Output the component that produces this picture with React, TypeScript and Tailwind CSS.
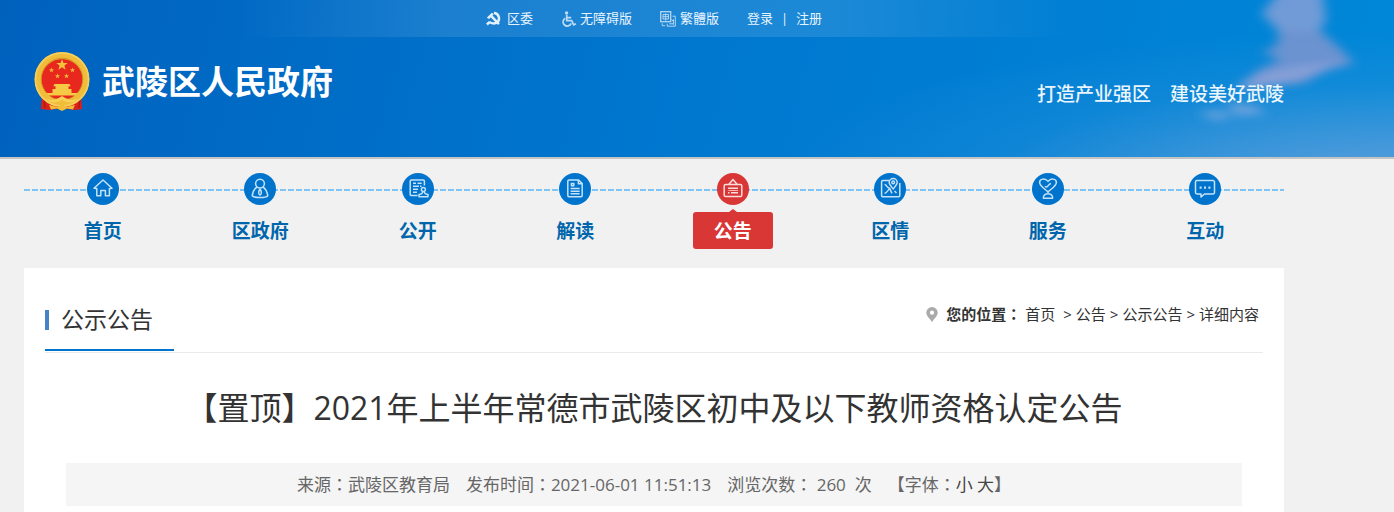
import React from 'react';

const navItems = [
  {
    name: '首页',
    icon: (
      <>
        <path d="M7 15.2 16 7l9 8.2-2.6.3v7.3h-4v-5.3h-4.6v5.3H9.8v-7.3z" />
      </>
    ),
  },
  {
    name: '区政府',
    icon: (
      <>
        <circle cx="16" cy="10.6" r="4.4" />
        <path d="M13 13.8C10.400 15.800 8.600 19.600 8.200 22.800c2 2.400 13.600 2.400 15.600 0-.4-3.200-2.200-7-4.800-9" />
        <path d="M16 16.4c-1.600 1.600-2 4.400 0 5.600 2-1.200 1.600-4 0-5.600z" />
      </>
    ),
  },
  {
    name: '公开',
    icon: (
      <>
        <path d="M15.6 22.6H9.4a1.2 1.2 0 0 1-1.2-1.2V8.2A1.2 1.2 0 0 1 9.4 7h11.8a1.2 1.2 0 0 1 1.2 1.2v4.4" />
        <path d="M11 10.2h3M15.5 10.2h4.2M11 13.2h6M18 13.2h1.5M11 16.2h5M11 19.2h4" />
        <circle cx="21.4" cy="16.4" r="2" />
        <path d="M20.6 18.6c.2 1.8-.6 2.4-3.6 3v2.2h9v-2.2c-3-.6-3.8-1.2-3.600-3" />
      </>
    ),
  },
  {
    name: '解读',
    icon: (
      <>
        <path d="M19.6 7H10a1.2 1.2 0 0 0-1.2 1.2v14.4a1.2 1.2 0 0 0 1.2 1.2h12a1.2 1.2 0 0 0 1.2-1.2V10.6z" />
        <path d="M19.4 7v3.8h3.8" />
        <path d="M12.4 10.400h2.400v2.400h-2.400zM11.600 15.600h9M11.600 18.200h9M11.600 20.800h9" />
      </>
    ),
  },
  {
    name: '公告',
    active: true,
    icon: (
      <>
        <rect x="7.2" y="11.600" width="17.600" height="12" rx="1.4" />
        <path d="M11.800 11.400 16 6.600l4.200 4.800M11 15.200h10M11 19.800h1.500M14 19.800h7" />
        <path d="M11.500 17.500h9.500" strokeWidth="0.8" />
      </>
    ),
  },
  {
    name: '区情',
    icon: (
      <>
        <path d="M15.500 7.400H8.800A1.200 1.200 0 0 0 7.600 8.600v14a1.200 1.200 0 0 0 1.200 1.200h15.800a1.200 1.200 0 0 0 1.200-1.200V10" />
        <path d="M19.200 16c-2.400-3-4-4.600-4-6.400a4 4 0 0 1 8 0c0 1.800-1.600 3.400-4 6.400z" />
        <circle cx="19.200" cy="9.400" r="1.300" />
        <path d="M10.600 11.500c2 .2 2 2.500 4 3.300s1.800 3 3.400 5.500M10.600 20.500c1.800-.4 3.400-3 4.800-4.600M20.500 18l2 2" />
      </>
    ),
  },
  {
    name: '服务',
    icon: (
      <>
        <path d="M16 18.800c-4.200-3.600-8.400-6.200-8.400-9.400 0-3.600 5.400-4.800 8.400-1 3-3.800 8.400-2.600 8.400 1 0 3.200-4.200 5.800-8.400 9.400z" />
        <path d="M13 13.200c1.200 1.600 2.400.6 3.400-.8.900-1.400 1.400-1.800 2.600-2" />
        <path d="M16 18.400v2M11.400 25.200c-.8-5.800 10-5.800 9.200 0z" />
      </>
    ),
  },
  {
    name: '互动',
    icon: (
      <>
        <path d="M7.900 7.500h16.200a1.400 1.400 0 0 1 1.400 1.400v10.700a1.400 1.400 0 0 1-1.400 1.400h-8.600l-3.500 3v-3H7.900a1.400 1.400 0 0 1-1.400-1.400V8.900a1.400 1.400 0 0 1 1.400-1.400z" />
        <path d="M10.600 14.600h2M15 14.600h2M19.400 14.600h2" strokeWidth="2.200" />
      </>
    ),
  },
];

// the TC face centres the full-width colon in its box
const Colon = () => <span className="font-['Noto_Sans_CJK_TC',sans-serif]">：</span>;

const PartyIcon = () => (
  <svg className="size-[15px]" viewBox="0 0 16 16" fill="none" stroke="#e4f1fc" strokeWidth="2.6" aria-hidden="true">
    <path d="M8.600 1.800c5.800 1.200 7 8.200 2.600 10.600-2.800 1.500-5.600.8-7.800-.8" />
    <path d="M5 4.600 13.800 14" />
    <path d="M.8 7.200 6.200 1.800l2.200 1.400L3.400 8.600z" fill="#e4f1fc" stroke="none" />
    <path d="M4 11.600 1 14.400" />
  </svg>
);

const WheelchairIcon = () => (
  <svg className="size-4" viewBox="0 0 16 16" fill="none" stroke="#bcdcf6" strokeWidth="1.7" aria-hidden="true">
    <circle cx="5.600" cy="2" r="1.700" fill="#bcdcf6" stroke="none" />
    <path d="M5.700 4v5.600h5l2 4.200 2.300-1M6 6.600h4.200" />
    <path d="M4.200 7.200a4.200 4.200 0 1 0 6 5.200" />
  </svg>
);

const ConvertIcon = () => (
  <svg className="size-4" viewBox="0 0 16 16" fill="none" stroke="#b4d6f3" aria-hidden="true">
    <rect x="0.700" y="0.700" width="10" height="10" strokeWidth="1.300" />
    <path d="M3 3.500h5.500v4.500H3zM3 5.700h5.500M5.700 2.500v7" />
    <path d="M12.500 5.200h2.800v10H7.200v-2.500M9.300 12.800h4M11.500 8.500l2 2M13.400 8.200v5.500M2.200 12.300v2.400h2.800" />
  </svg>
);

const Emblem = () => (
  <svg className="h-[59px] w-14" viewBox="0 0 56 59" aria-hidden="true">
    <path d="M8 42 7 57l8 1 13-2 13 2 7-1-1-15z" fill="#d9201a" />
    <path d="M10 46l1 10M46 46l-1 10" stroke="#b01512" strokeWidth="1.2" />
    <circle cx="28" cy="27.5" r="24" fill="#e8271e" stroke="#f0bd3a" strokeWidth="7" />
    <circle cx="28" cy="27.5" r="26.500" fill="none" stroke="#f6d062" strokeWidth="1.500" />
    <circle cx="28" cy="27" r="20.800" fill="none" stroke="#c98d1d" strokeWidth="0.8" />
    <path d="m28 7 1.500 4h4.200l-3.300 2.600 1.200 4.100L28 15.300l-3.600 2.400 1.200-4.100-3.300-2.600h4.200z" fill="#f3c23c" />
    <path
      d="m17.500 15.500.7 1.700h1.900l-1.500 1.200.6 1.900-1.700-1.100-1.700 1.100.6-1.900-1.500-1.200h1.900zM38.500 15.500l.7 1.700h1.900l-1.500 1.200.6 1.900-1.700-1.100-1.700 1.100.6-1.900-1.500-1.200h1.900zM23.500 21.500l.7 1.700h1.900l-1.500 1.200.6 1.900-1.700-1.100-1.700 1.100.6-1.900-1.500-1.200h1.900zM32.500 21.500l.7 1.700h1.900l-1.500 1.200.6 1.900-1.700-1.100-1.700 1.100.6-1.900-1.500-1.200h1.900z"
      fill="#eeb43a"
    />
    <path d="M20.500 32h15l1.200 2.200H19.300zM21.500 34.200h13V37h-13zM18.500 37h19v4h-19zM12 41h32l-2.500 2.500h-27z" fill="#f6ca45" />
    <path d="M12 46c6 4 11 1 16-2 5 3 10 6 16 2-3 6-11 5-16 2-5 3-13 4-16-2z" fill="#f7d055" />
    <path d="m15 53 9 2 4-3 4 3 9-2-2 4.500-6-1-5 2.500-5-2.500-6 1z" fill="#f2bd37" />
  </svg>
);

const Clouds = () => (
  <svg className="absolute right-0 top-0 h-full w-[394px]" viewBox="0 0 394 157" aria-hidden="true">
    <defs>
      <filter id="soft" x="-40%" y="-40%" width="180%" height="180%">
        <feGaussianBlur stdDeviation="6 4" />
      </filter>
    </defs>
    <g filter="url(#soft)">
      <path d="M262 14 280-10h42l4 30-8 14-38 0-8-10z" fill="#7d9dd6" opacity="0.9" />
      <path d="M280 30 322 32l22 20 10 12-26 6-26 14-62 4 18-18 22-10-18-8 14-6z" fill="#7593cf" opacity="0.9" />
      <path d="M238 84c24-14 62-20 108-22-30 10-54 24-104 28z" fill="#98a8dc" opacity="0.6" />
      <path d="M226 102l30 4 10 8-30 2z" fill="#7ba6dd" opacity="0.8" />
      <path d="M198 112l24-2 12 7-20 4z" fill="#7ba6dd" opacity="0.7" />
    </g>
  </svg>
);

const Header = () => (
  <header className="relative border-b-2 border-[#c4c4c4] bg-[radial-gradient(ellipse_620px_150px_at_100%_115%,#5d9fdc_0%,#4c9adab3_35%,#2d92da55_65%,#0088d800_100%),linear-gradient(105deg,#0061bd_0%,#006dc7_25%,#0078d0_50%,#007fd4_75%,#0088d8_100%)]">
    <Clouds />
    <div className="relative max-w-[1308px] bg-[linear-gradient(90deg,transparent_18%,#ffffff1c_34%,#ffffff1c_64%,transparent_82%)]">
      <nav className="flex h-[37px] items-center justify-center gap-7 text-[13px] text-[#e8f4fd]">
        <a href="#party" className="flex items-center gap-[6px]">
          <PartyIcon />
          区委
        </a>
        <a href="#accessible" className="flex items-center gap-[3px]">
          <WheelchairIcon />
          无障碍版
        </a>
        <a href="#traditional" className="flex items-center gap-1">
          <ConvertIcon />
          繁體版
        </a>
        <span className="flex items-center gap-2">
          <a href="#login">登录</a>
          <span>|</span>
          <a href="#register">注册</a>
        </span>
      </nav>
    </div>
    <div className="relative flex h-[120px] max-w-[1284px] items-start justify-between pl-[34px] pt-[15px]">
      <a href="#home" className="flex items-center gap-3 text-white">
        <Emblem />
        <h1 className="text-[33px] font-bold leading-[59px]">武陵区人民政府</h1>
      </a>
      <p className="pt-7 text-[19px] font-medium leading-7 text-[#eaf5fd]">打造产业强区　建设美好武陵</p>
    </div>
  </header>
);

const MainNav = () => (
  <nav className="ml-6 max-w-[1260px] bg-[linear-gradient(90deg,#7fc4f3_6px,transparent_6px)] bg-[length:8px_2px] bg-[position:0_30px] bg-repeat-x pb-[19px] pt-[14px]">
    <ul className="grid grid-cols-8">
      {navItems.map((item) => (
        <li key={item.name}>
          <a href={`#${item.name}`} className="flex flex-col items-center">
            <span className={`size-8 rounded-full ${item.active ? 'bg-[#d93636]' : 'bg-[#0074cc]'}`}>
              <svg
                viewBox="0 0 32 32"
                fill="none"
                stroke={item.active ? '#fbdcdc' : '#c4e2f8'}
                strokeWidth="1.5"
                strokeLinejoin="round"
                aria-hidden="true"
              >
                {item.icon}
              </svg>
            </span>
            <svg className="mt-1 h-[3px] w-2" viewBox="0 0 8 3" aria-hidden="true">
              {item.active && <path d="M0 3 4 0l4 3z" fill="#d93636" />}
            </svg>
            <span
              className={`w-20 rounded-[3px] pt-0.5 text-center text-[19px] font-bold leading-[35px] ${
                item.active ? 'bg-[#d93636] text-white' : 'text-[#0066ac]'
              }`}
            >
              {item.name}
            </span>
          </a>
        </li>
      ))}
    </ul>
  </nav>
);

const Breadcrumb = () => (
  <div className="flex items-center pr-1 pt-3 text-[15px] leading-6 text-[#333]">
    <svg className="mr-2 h-[15px] w-3" viewBox="0 0 12 15" aria-hidden="true">
      <path
        d="M6 0a5.700 5.700 0 0 0-5.700 5.700C.3 9 3.500 11 6 15c2.500-4 5.700-6 5.700-9.300A5.700 5.700 0 0 0 6 0zm0 3.600a2.100 2.100 0 1 1 0 4.200 2.100 2.100 0 0 1 0-4.200z"
        fill="#aaa"
      />
    </svg>
    <b className="mr-1">您的位置<Colon /></b>
    <a href="#home" className="mr-2">首页</a>
    <span className="mr-1">&gt;</span>
    <a href="#notice" className="mr-1">公告</a>
    <span className="mr-1">&gt;</span>
    <a href="#public" className="mr-1">公示公告</a>
    <span className="mr-1">&gt;</span>
    <span>详细内容</span>
  </div>
);

export default function App() {
  return (
    <div className="flex min-h-screen flex-col bg-[#f1f1f1] font-['Open_Sans','Noto_Sans_CJK_SC',sans-serif]">
      <Header />
      <MainNav />
      <main className="ml-6 max-w-[1260px] flex-1 bg-white px-[21px] pb-1 pt-[22px]">
        <div className="flex items-start justify-between border-b border-[#eaeaea] pb-px">
          <h2 className="flex h-[61px] w-[129px] items-center border-b-2 border-[#0074cc] text-[23px] text-[#333]">
            <span className="mr-3 h-5 w-1 bg-[#4484c6]" />
            公示公告
          </h2>
          <Breadcrumb />
        </div>
        <article className="px-[21px]">
          <h1 className="py-8 text-center text-[32px] leading-[46px] text-[#333]">
            【置顶】2021年上半年常德市武陵区初中及以下教师资格认定公告
          </h1>
          <div className="flex h-[43px] items-center justify-center gap-4 bg-[#f5f5f5] text-[17px] leading-7 text-[#666]">
            <span>来源<Colon />武陵区教育局</span>
            <span>发布时间<Colon />2021-06-01 11:51:13</span>
            <span>浏览次数<Colon /> 260&nbsp; 次</span>
            <span>
              【字体<Colon /><button className="text-[#444]">小</button> <button className="text-[#444]">大</button>】
            </span>
          </div>
        </article>
      </main>
    </div>
  );
}
